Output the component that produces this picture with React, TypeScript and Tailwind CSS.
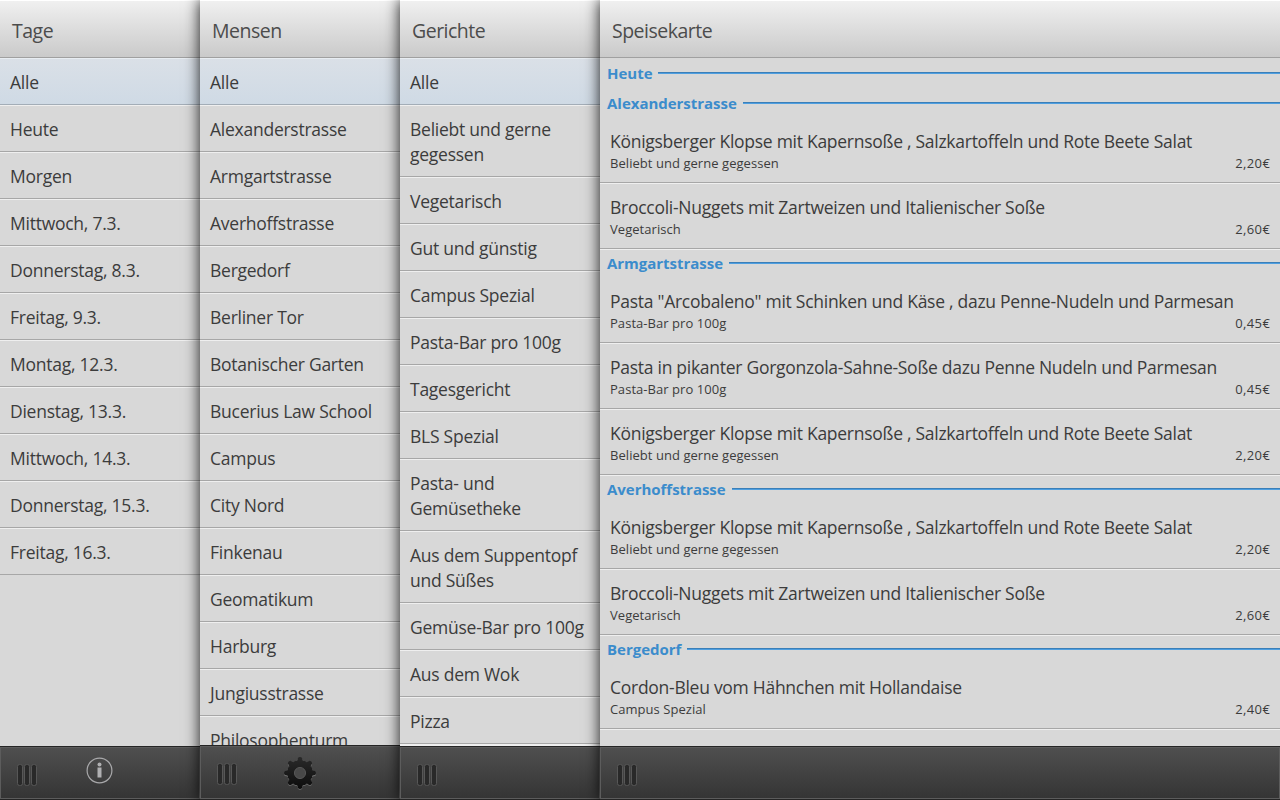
import React from "react";

const days = ["Alle", "Heute", "Morgen", "Mittwoch, 7.3.", "Donnerstag, 8.3.", "Freitag, 9.3.", "Montag, 12.3.", "Dienstag, 13.3.", "Mittwoch, 14.3.", "Donnerstag, 15.3.", "Freitag, 16.3."];
const canteens = ["Alle", "Alexanderstrasse", "Armgartstrasse", "Averhoffstrasse", "Bergedorf", "Berliner Tor", "Botanischer Garten", "Bucerius Law School", "Campus", "City Nord", "Finkenau", "Geomatikum", "Harburg", "Jungiusstrasse", "Philosophenturm"];
const dishes = ["Alle", "Beliebt und gerne gegessen", "Vegetarisch", "Gut und günstig", "Campus Spezial", "Pasta-Bar pro 100g", "Tagesgericht", "BLS Spezial", "Pasta- und Gemüsetheke", "Aus dem Suppentopf und Süßes", "Gemüse-Bar pro 100g", "Aus dem Wok", "Pizza"];

const klopse = ["Königsberger Klopse mit Kapernsoße , Salzkartoffeln und Rote Beete Salat", "Beliebt und gerne gegessen", "2,20€"];
const nuggets = ["Broccoli-Nuggets mit Zartweizen und Italienischer Soße", "Vegetarisch", "2,60€"];
const menu = [
  { name: "Alexanderstrasse", meals: [klopse, nuggets] },
  {
    name: "Armgartstrasse",
    meals: [
      ['Pasta "Arcobaleno" mit Schinken und Käse , dazu Penne-Nudeln und Parmesan', "Pasta-Bar pro 100g", "0,45€"],
      ["Pasta in pikanter Gorgonzola-Sahne-Soße dazu Penne Nudeln und Parmesan", "Pasta-Bar pro 100g", "0,45€"],
      klopse,
    ],
  },
  { name: "Averhoffstrasse", meals: [klopse, nuggets] },
  { name: "Bergedorf", meals: [["Cordon-Bleu vom Hähnchen mit Hollandaise", "Campus Spezial", "2,40€"]] },
];

function Header({ title }: { title: string }) {
  return (
    <div className="h-[58px] shrink-0 border-t border-b border-t-white border-b-[#a0a0a0] bg-linear-to-b from-[#f0f0f0] to-[#cacaca] pl-3 pt-[17px] text-[19.5px] leading-[26px] tracking-[-0.5px] text-[#4c4c4c]">
      {title}
    </div>
  );
}

function Grip() {
  return (
    <svg className="mt-[16px] ml-[16px] h-[22px] w-[21px] shrink-0" viewBox="0 0 21 22">
      {[0.5, 7.5, 14.5].map((x) => (
        <rect key={x} x={x} y="0.5" width="5" height="21" rx="2" fill="#292929" stroke="#575757" />
      ))}
    </svg>
  );
}

function Footer({ children, tall }: { children?: React.ReactNode; tall?: boolean }) {
  return (
    <div className={`${tall ? "h-[55px]" : "h-[54px]"} shrink-0 border-t border-b border-t-[#252525] border-b-[#252525]`}>
      <div className="flex h-full border border-[#5c5c5c] bg-linear-to-b from-[#4f4f4f] to-[#353535]">
        <Grip />
        {children}
      </div>
    </div>
  );
}

function Rows({ items, more }: { items: string[]; more?: boolean }) {
  return (
    <div className="min-h-0 flex-1 overflow-hidden">
      {items.map((t, i) => (
        <div
          key={t}
          className={`border-t border-b pt-[11px] pb-[9px] pl-[10px] pr-[8px] text-[17.5px] leading-[25px] tracking-[-0.25px] ${
            i === 0 ? "border-t-[#e8edf2] border-b-[#a3adb7] bg-linear-to-b from-[#dae0e7] to-[#cfdae5]" : "border-t-[#efefef] border-b-[#a7a7a7]"
          }`}
        >
          {t}
        </div>
      ))}
      {more && <div className="h-[2px] bg-[#efefef]" />}
    </div>
  );
}

const column = "relative flex h-full w-[200px] shrink-0 flex-col bg-[#d8d8d8] shadow-[0_0_14px_rgba(0,0,0,0.9)]";

function Section({ name }: { name: string }) {
  return (
    <div className="flex h-7 items-center pl-[7px] text-[15px] font-bold leading-5 tracking-[-0.02px] text-[#3b8ccc]">
      {name}
      <span className="ml-[6px] h-[2px] flex-1 border-t border-t-[#3b7fb8] bg-[#4f9fe0]" />
    </div>
  );
}

const polar = (r: number, deg: number) => {
  const a = (deg * Math.PI) / 180;
  return `${(16 + r * Math.sin(a)).toFixed(2)} ${(16 - r * Math.cos(a)).toFixed(2)}`;
};
const gearPath =
  [0, 45, 90, 135, 180, 225, 270, 315]
    .map((a, i) => `${i ? "L" : "M"}${polar(15.2, a - 8)} Q${polar(17, a)} ${polar(15.2, a + 8)} C${polar(11.8, a + 11)} ${polar(12.4, a + 17)} ${polar(13.2, a + 22.5)} C${polar(12.4, a + 28)} ${polar(11.8, a + 34)} ${polar(15.2, a + 37)}`)
    .join(" ") + "Z";

function Gear() {
  return (
    <svg className="mt-[10px] ml-[46px] h-[33px] w-8" viewBox="0 0 32 33">
      <defs>
        <linearGradient id="gear" x1="0" y1="0" x2="0" y2="1">
          <stop offset="0" stopColor="#2a2a2a" />
          <stop offset="1" stopColor="#0c0c0c" />
        </linearGradient>
      </defs>
      <path d={gearPath} fill="#747474" transform="translate(0 0.8)" />
      <path d={gearPath} fill="url(#gear)" />
      <circle cx="16" cy="16" r="5.6" fill="#484848" stroke="#606060" strokeWidth="0.8" />
    </svg>
  );
}

export default function App() {
  return (
    <div className="flex h-[800px] w-[1280px] overflow-hidden bg-[#d8d8d8] font-['Open_Sans','Noto_Sans',sans-serif] text-[#3c3c3c]">
      <div className={column}>
        <Header title="Tage" />
        <Rows items={days} />
        <Footer>
          <svg className="mt-[9px] ml-[48px] h-[27px] w-[27px]" viewBox="0 0 27 27">
            <circle cx="13.5" cy="13.5" r="12.4" fill="none" stroke="#a9a9ab" strokeWidth="1.2" />
            <circle cx="13.5" cy="7.5" r="2" fill="#b0b0b2" />
            <path d="M11.5 10.5h4v10h-4z" fill="#b0b0b2" />
          </svg>
        </Footer>
      </div>
      <div className={column}>
        <Header title="Mensen" />
        <Rows items={canteens} />
        <Footer tall>
          <Gear />
        </Footer>
      </div>
      <div className={column}>
        <Header title="Gerichte" />
        <Rows items={dishes} more />
        <Footer />
      </div>
      <div className="relative flex h-full min-w-0 flex-1 flex-col bg-[#d8d8d8] shadow-[0_0_14px_rgba(0,0,0,0.9)]">
        <Header title="Speisekarte" />
        <div className="min-h-0 flex-1 overflow-hidden pt-px">
          <div className="mb-[2px]">
            <Section name="Heute" />
          </div>
          {menu.map((s) => (
            <div key={s.name}>
              <Section name={s.name} />
              {s.meals.map((m, i) => (
                <div key={i} className="h-[66px] border-b border-b-[#a7a7a7] px-[10px] pt-[11px] shadow-[0_1px_0_#efefef]">
                  <div className="text-[17.5px] leading-[27px] tracking-[-0.27px] whitespace-nowrap">{m[0]}</div>
                  <div className="flex justify-between text-[13px] leading-4">
                    <span className="tracking-[0.05px]">{m[1]}</span>
                    <span className="-mr-[0.3px] tracking-[0.4px]">{m[2]}</span>
                  </div>
                </div>
              ))}
            </div>
          ))}
        </div>
        <Footer />
      </div>
    </div>
  );
}
